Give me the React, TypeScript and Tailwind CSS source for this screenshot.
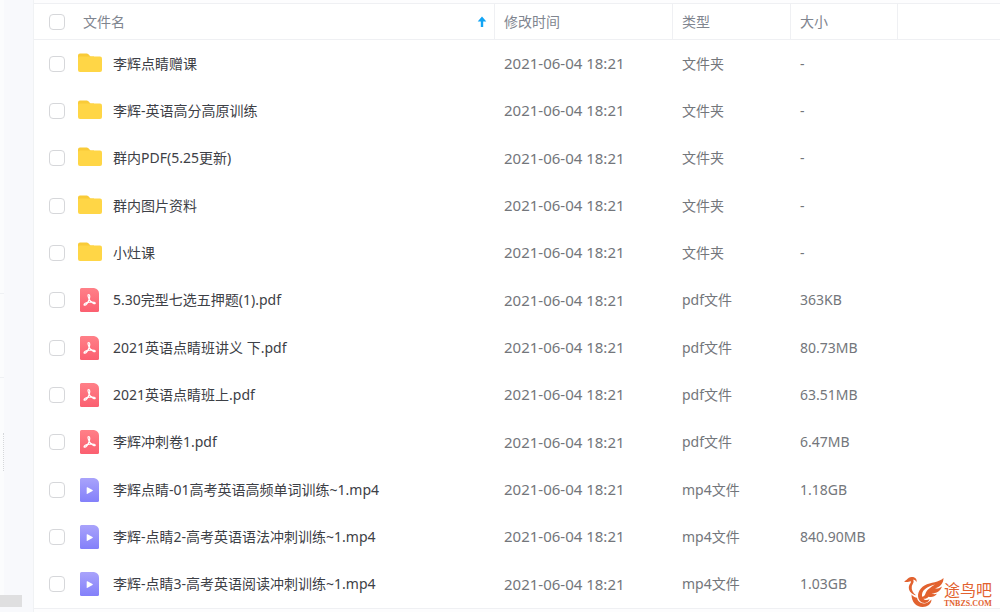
import { useState } from 'react'

type FileKind = 'folder' | 'pdf' | 'mp4'

interface FileEntry {
  name: string
  modified: string
  kind: FileKind
  size: string
}

const files: FileEntry[] = [
  { name: '李辉点睛赠课', modified: '2021-06-04 18:21', kind: 'folder', size: '-' },
  { name: '李辉-英语高分高原训练', modified: '2021-06-04 18:21', kind: 'folder', size: '-' },
  { name: '群内PDF(5.25更新)', modified: '2021-06-04 18:21', kind: 'folder', size: '-' },
  { name: '群内图片资料', modified: '2021-06-04 18:21', kind: 'folder', size: '-' },
  { name: '小灶课', modified: '2021-06-04 18:21', kind: 'folder', size: '-' },
  { name: '5.30完型七选五押题(1).pdf', modified: '2021-06-04 18:21', kind: 'pdf', size: '363KB' },
  { name: '2021英语点睛班讲义 下.pdf', modified: '2021-06-04 18:21', kind: 'pdf', size: '80.73MB' },
  { name: '2021英语点睛班上.pdf', modified: '2021-06-04 18:21', kind: 'pdf', size: '63.51MB' },
  { name: '李辉冲刺卷1.pdf', modified: '2021-06-04 18:21', kind: 'pdf', size: '6.47MB' },
  { name: '李辉点睛-01高考英语高频单词训练~1.mp4', modified: '2021-06-04 18:21', kind: 'mp4', size: '1.18GB' },
  { name: '李辉-点睛2-高考英语语法冲刺训练~1.mp4', modified: '2021-06-04 18:21', kind: 'mp4', size: '840.90MB' },
  { name: '李辉-点睛3-高考英语阅读冲刺训练~1.mp4', modified: '2021-06-04 18:21', kind: 'mp4', size: '1.03GB' },
]

const kindLabels: Record<FileKind, string> = {
  folder: '文件夹',
  pdf: 'pdf文件',
  mp4: 'mp4文件',
}

const checkboxClass =
  'size-4 shrink-0 appearance-none rounded border border-[#d6d7da] bg-white checked:border-[#06a7ff] checked:bg-[#06a7ff]'

function FileIcon({ kind }: { kind: FileKind }) {
  if (kind === 'folder') {
    return (
      <svg className="size-6 shrink-0" viewBox="0 0 24 24" aria-hidden="true">
        <path d="M0 3.5A2 2 0 0 1 2 1.500H8.700a2 2 0 0 1 1.400.600L12.500 4.500H16V12H0Z" fill="#f9cb38" />
        <path d="M0 6.500Q0 4.500 2 4.500H22Q24 4.500 24 6.500V18Q24 20 22 20H2Q0 20 0 18Z" fill="#ffd646" />
      </svg>
    )
  }

  if (kind === 'pdf') {
    return (
      <svg className="size-6 shrink-0" viewBox="0 0 24 24" aria-hidden="true">
        <defs>
          <linearGradient id="pdf-fill" x1="0" y1="0" x2="0" y2="1">
            <stop offset="0" stopColor="#ff8088" />
            <stop offset="1" stopColor="#fb5f70" />
          </linearGradient>
        </defs>
        <path d="M3.500 0H16Q21 1 21 5.500V22.500A1.500 1.500 0 0 1 19.500 24H3.500A1.500 1.500 0 0 1 2 22.500V1.500A1.500 1.500 0 0 1 3.500 0Z" fill="url(#pdf-fill)" />
        <path
          d="M10.500 6.500C12.300 6.500 11.900 9.500 11 11.800C10 14.400 8.200 17.200 6.800 17.200C5.200 17.200 6.300 15.400 8.800 14.700C11.300 14 17.200 13.400 17.200 15.200C17.200 16.700 13.500 14.600 12 12.600C10.600 10.700 9.300 6.500 10.500 6.500Z"
          fill="none"
          stroke="#fff"
          strokeWidth="1.2"
          strokeLinejoin="round"
        />
      </svg>
    )
  }

  return (
    <svg className="size-6 shrink-0" viewBox="0 0 24 24" aria-hidden="true">
      <defs>
        <linearGradient id="video-fill" x1="0" y1="0" x2="0" y2="1">
          <stop offset="0" stopColor="#a9a3fb" />
          <stop offset="1" stopColor="#8380fa" />
        </linearGradient>
      </defs>
      <path d="M3.500 0H16Q21 1 21 5.500V22.500A1.500 1.500 0 0 1 19.500 24H3.500A1.500 1.500 0 0 1 2 22.500V1.500A1.500 1.500 0 0 1 3.500 0Z" fill="url(#video-fill)" />
      <path d="M8.700 9.700Q8.700 8.900 9.500 9.300L14.500 12.100Q15.200 12.600 14.500 13.100L9.500 15.800Q8.700 16.200 8.700 15.400Z" fill="#fff" />
    </svg>
  )
}

function SortArrow() {
  return (
    <svg className="h-3 w-2.5" viewBox="0 0 10 12" aria-hidden="true">
      <path d="M5 0.500L9.300 5.500H6.200V11H3.800V5.500H0.700Z" fill="#12a4f4" />
    </svg>
  )
}

function SiteMark() {
  return (
    <div className="absolute right-2 bottom-1 flex items-end text-[#e2622f]">
      <svg className="h-8 w-10" viewBox="0 0 40 32" aria-hidden="true">
        <path d="M0 5.200C2.500 5 3.300 1.500 7.500 1C11.500 0.800 13.500 3.500 12.300 6.300C12 4.300 10.500 3.300 9 3.800C10.800 6 8.300 8 7.800 10.500C7.200 14 9 17 12 19.300C8 18.500 4.800 15.300 4.800 11.500C4.800 8.500 7.500 7 6.800 5.300C5.500 4.800 3 7.300 0 5.200Z" fill="currentColor" />
        <path d="M39.500 2C39.500 7.500 36 11 31 12.500C34 12.800 36 12 38 10.500C36.500 15 32.500 17.500 27.500 17.500C29.500 18.500 31.500 18.300 33 17.800C30.500 21 27.500 21.500 24.500 20.700C22 23.500 18.500 23.500 17 20.500C18.500 21.300 20.500 20.500 21.300 18C22.700 13.500 26.500 11.500 31 8.500C23.500 10.500 18.500 13.500 18 18.500C17.500 23.500 22.500 25.500 25.500 23C24.500 27.500 18.500 28.500 15.500 24.500C12 19.500 15 12.500 20.500 9.500C27 6 35 6.500 39.500 2Z" fill="currentColor" />
        <path d="M7.500 18.500C9.500 21 11.500 21.500 13 21.800C14 27 21 30.500 27.500 23.500C27.500 28 23.500 31 18.500 31C12 31 7.500 26 7.500 18.500Z" fill="currentColor" />
      </svg>
      <div className="flex flex-col">
        <span className="text-base leading-5">途鸟吧</span>
        <span className="font-['Liberation_Serif',serif] text-[8px] leading-2 font-bold">TNBZS.COM</span>
      </div>
    </div>
  )
}

export default function App() {
  const [selected, setSelected] = useState<string[]>([])
  const allSelected = selected.length === files.length

  const toggleFile = (name: string) => {
    setSelected(selected.includes(name) ? selected.filter(item => item !== name) : [...selected, name])
  }

  const toggleAll = () => {
    setSelected(allSelected ? [] : files.map(file => file.name))
  }

  return (
    <div className="relative flex h-screen bg-[#fdfdfe] font-['Noto_Sans','Noto_Sans_CJK_SC',sans-serif] text-sm text-[#73767b]">
      {/* Edge of the navigation pane */}
      <aside className="flex w-[34px] shrink-0 flex-col border-r border-[#f0f2f4] bg-[#f8f9fc]">
        <div className="flex w-1 flex-1 flex-col justify-end bg-[#fbfcfd]">
          <div className="h-[85px] border-y border-[#eff1f4]"></div>
          <div className="mt-[55px] mb-[124px] h-[38px] border-r border-dotted border-[#d5d7da]"></div>
        </div>
        <div className="mb-[5px] h-3 w-[22px] bg-[#dfdfe0]"></div>
      </aside>

      <main className="flex min-w-0 flex-1 flex-col py-[3px]">
        <div className="min-h-0 flex-1 border-y border-[#eff0f3] bg-white">
          <table className="h-full w-full table-fixed border-separate border-spacing-0 text-left">
            <colgroup>
              <col />
              <col className="w-[178px]" />
              <col className="w-[118px]" />
              <col className="w-[107px]" />
              <col className="w-[102px]" />
            </colgroup>
            <thead className="text-[#80858f]">
              <tr>
                <th className="h-9 border-r border-b border-[#eff0f3] pr-[7px] pl-[15px] font-normal">
                  <div className="flex items-center">
                    <input type="checkbox" aria-label="全选" checked={allSelected} onChange={toggleAll} className={checkboxClass} />
                    <button className="ml-[18px] flex flex-1 items-center justify-between">
                      文件名
                      <SortArrow />
                    </button>
                  </div>
                </th>
                <th className="border-r border-b border-[#eff0f3] pl-[9px] font-normal">修改时间</th>
                <th className="border-r border-b border-[#eff0f3] pl-[9px] font-normal">类型</th>
                <th className="border-r border-b border-[#eff0f3] pl-[9px] font-normal">大小</th>
                <td className="border-b border-[#eff0f3]"></td>
              </tr>
            </thead>
            <tbody>
              {files.map((file, index) => (
                <tr key={file.name} className="hover:bg-[#fafafc]">
                  <td className="pl-[15px]">
                    <div className="flex items-center">
                      <input
                        id={`file-${index}`}
                        type="checkbox"
                        checked={selected.includes(file.name)}
                        onChange={() => toggleFile(file.name)}
                        className={checkboxClass}
                      />
                      <label htmlFor={`file-${index}`} className="ml-[13px] flex items-center gap-[11px] whitespace-nowrap text-[#3d4046]">
                        <FileIcon kind={file.kind} />
                        {file.name}
                      </label>
                    </div>
                  </td>
                  <td className="pl-[9px] text-[15px]">{file.modified}</td>
                  <td className="pl-[9px]">{kindLabels[file.kind]}</td>
                  <td className="pl-[9px]">{file.size}</td>
                  <td></td>
                </tr>
              ))}
            </tbody>
          </table>
        </div>
      </main>

      <SiteMark />
    </div>
  )
}
